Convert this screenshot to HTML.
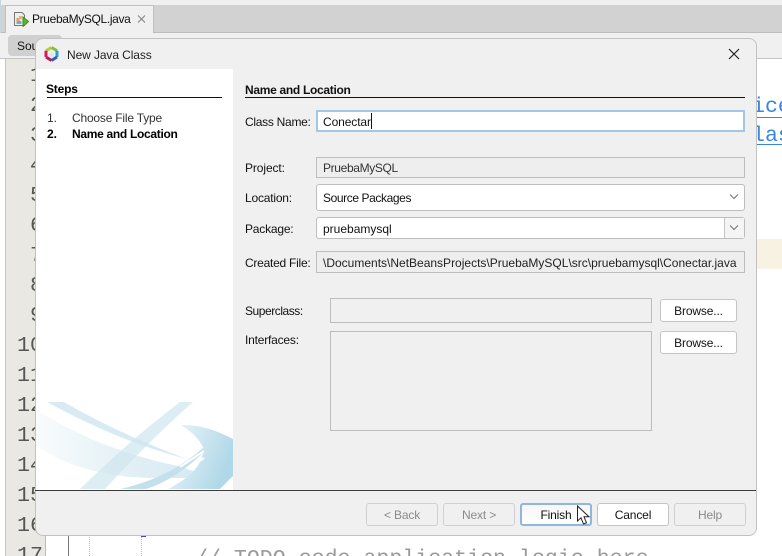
<!DOCTYPE html>
<html>
<head>
<meta charset="utf-8">
<style>
html,body{margin:0;padding:0;width:782px;height:556px;overflow:hidden;background:#fff}
#r{position:relative;width:782px;height:556px;overflow:hidden;background:#fff;font-family:"Liberation Sans",sans-serif;font-size:12px;color:#111}
.a{position:absolute;box-sizing:border-box}
.t{position:absolute;white-space:nowrap;line-height:14px}
.n{position:absolute;font-family:"Liberation Mono",monospace;font-size:21.600px;line-height:30px;color:#555;white-space:pre}
.f{position:absolute;box-sizing:border-box;border:1px solid #bdbdbd;background:#f0f0f0}
.w{background:#fff;border-radius:3px}
.b{position:absolute;box-sizing:border-box;height:23px;border:1px solid #c4c4c4;border-radius:3px;background:#fff;text-align:center;line-height:22px;color:#111;letter-spacing:-.15px}
.d{background:#f0f0f0;color:#8a8a8a;border-color:#d0d0d0}
</style>
</head>
<body>
<div id="r">
<div class="a" style="left:0;top:0;width:782px;height:58px;background:#f0f0f0"></div>
<div class="a" style="left:0;top:5px;width:782px;height:28px;background:#d2d2d2;border-bottom:1px solid #bcbcbc"></div>
<div class="a" style="left:5px;top:5px;width:149px;height:28px;background:#f0f0f0;border:1px solid #c0c0c0;border-bottom:0"></div>
<svg class="a" style="left:13px;top:11px" width="16" height="16" viewBox="0 0 16 16"><path d="M1.500 1.500H9L11.500 4V14.500H1.500Z" fill="#eee" stroke="#777"/><rect x="3.500" y="7" width="3" height="3" fill="#d9a066"/><rect x="6" y="5" width="3" height="3" fill="#e3b27c"/><rect x="3.500" y="10" width="5" height="3" fill="#7fa8c9"/><path d="M10 6L15.500 10.500L10 15.500Z" fill="#5cb531" stroke="#3f8f1c"/></svg>
<div class="t" style="left:32px;top:12px;letter-spacing:-.35px;color:#111">PruebaMySQL.java</div>
<svg class="a" style="left:137px;top:14px" width="10" height="10"><path d="M1 1.500L8 8.500M8 1.500L1 8.500" stroke="#8a8a8a" stroke-width="1.200" fill="none"/></svg>
<div class="a" style="left:8px;top:35px;width:54px;height:21px;background:#d0d0d0;border-radius:4px"></div>
<div class="t" style="left:17px;top:39px">Source</div>
<div class="a" style="left:0;top:58px;width:782px;height:1px;background:#c4c4c4"></div>
<div class="a" style="left:0;top:0;width:1px;height:33px;background:#c9d4e0"></div>
<div class="a" style="left:5px;top:59px;width:1px;height:497px;background:#c4c4c4"></div>
<div class="a" style="left:6px;top:59px;width:39px;height:497px;background:#e9e8e3"></div>
<div class="a" style="left:45px;top:59px;width:1px;height:497px;background:#bbb"></div>
<div class="a" style="left:68px;top:535px;width:1px;height:21px;background:#777"></div>
<div class="a" style="left:89px;top:535px;width:0;height:21px;border-left:1px dotted #bbb"></div>
<div class="a" style="left:141px;top:535px;width:0;height:21px;border-left:1px dotted #bbb"></div>
<div class="a" style="left:141px;top:535px;width:5px;height:2px;background:#45558f"></div>
<div class="a" style="left:523px;top:535px;width:5px;height:1px;background:#333"></div>
<div class="a" style="left:600px;top:535px;width:5px;height:1px;background:#333"></div>
<div class="n" style="left:17px;top:31px">
 1
 2
 3
 4
 5
 6
 7
 8
 9
10
11
12
13
14
15
16
17</div>
<div class="a" style="left:757px;top:239px;width:25px;height:30px;background:#f7f2e1"></div>
<div class="n" style="left:752px;top:92px;color:#3a86dd">ice</div>
<div class="a" style="left:757px;top:117px;width:25px;height:1px;background:#3a86dd"></div>
<div class="n" style="left:752px;top:121px;color:#3a86dd">las</div>
<div class="a" style="left:757px;top:144px;width:25px;height:1px;background:#3a86dd"></div>
<div class="n" style="left:195px;top:544px;color:#9a9a9a">// TODO code application logic here</div>

<div class="a" style="left:35px;top:38px;width:722px;height:498px;background:#f0f0f0;border:1px solid #c2c2c2;border-radius:8px"></div>
<svg class="a" style="left:44px;top:46px" width="15" height="16" viewBox="0 0 15 16">
<path d="M7.500 5.500L10 7V10L7.500 11.500L5 10V7Z" fill="#dbeaf6"/>
<path d="M2 4.700L7.500 1.500" stroke="#b9cf3a" stroke-width="3" fill="none"/>
<path d="M7.500 1.500L13 4.700" stroke="#7cc242" stroke-width="3" fill="none"/>
<path d="M13 4.700V11" stroke="#2b9bd8" stroke-width="3" fill="none"/>
<path d="M13 11L7.500 14.500" stroke="#2b62b8" stroke-width="3" fill="none"/>
<path d="M7.500 14.500L2 11" stroke="#c9184f" stroke-width="3" fill="none"/>
<path d="M2 11V4.700" stroke="#d02060" stroke-width="3" fill="none"/>
</svg>
<div class="t" style="left:67px;top:48px;letter-spacing:-.1px;color:#222">New Java Class</div>
<svg class="a" style="left:728px;top:48px" width="12" height="12"><path d="M1 1L11 11M11 1L1 11" stroke="#222" stroke-width="1.200" fill="none"/></svg>

<div class="a" style="left:36px;top:69px;width:197px;height:421px;background:#fff"></div>
<svg class="a" style="left:36px;top:400px" width="197" height="90" viewBox="36 400 197 90">
<defs>
<linearGradient id="g1" x1="0" x2="1" y1="0" y2="0"><stop offset="0" stop-color="#d5e9f1" stop-opacity=".15"/><stop offset=".6" stop-color="#d5e9f1" stop-opacity=".75"/><stop offset="1" stop-color="#d5e9f1"/></linearGradient>
<linearGradient id="g2" x1="0" x2="1" y1="0" y2=".4"><stop offset="0" stop-color="#f0f7fa"/><stop offset="1" stop-color="#b0d8e8"/></linearGradient>
</defs>
<path d="M47 402H64Q115 432 187 459Q120 442 47 402Z" fill="#d8ebf3"/>
<path d="M36 410Q100 450 178 466L214 478H150Q80 476 36 446Z" fill="url(#g1)"/>
<path d="M180 402H193Q150 440 105 489H80Q130 440 180 402Z" fill="#cfe6f0" opacity=".7"/>
<path d="M120 489Q170 478 204 447L204 452Q175 480 146 489Z" fill="#c4e0ec"/>
<path d="M181 425Q205 424 233 439V476L220 489H168Q205 470 203 447Q197 435 181 425Z" fill="url(#g2)"/>
<path d="M180 467L204 451M190 467L204 458M150 489L176 480" stroke="#fff" stroke-width="2" fill="none"/>
</svg>
<div class="t" style="left:46px;top:82px;font-weight:bold;color:#000;letter-spacing:-.2px">Steps</div>
<div class="a" style="left:47px;top:97px;width:175px;height:1px;background:#111"></div>
<div class="t" style="left:47px;top:111px;color:#333">1.</div>
<div class="t" style="left:72px;top:111px;color:#333;letter-spacing:-.2px">Choose File Type</div>
<div class="t" style="left:47px;top:127px;font-weight:bold;color:#000">2.</div>
<div class="t" style="left:72px;top:127px;font-weight:bold;color:#000;letter-spacing:-.3px">Name and Location</div>

<div class="t" style="left:245px;top:83px;font-weight:bold;color:#111;letter-spacing:-.3px">Name and Location</div>
<div class="a" style="left:245px;top:97px;width:500px;height:1px;background:#111"></div>

<div class="t" style="left:245px;top:115px;letter-spacing:-.28px">Class Name:</div>
<div class="a" style="left:316px;top:110px;width:429px;height:22px;background:#fff;border:2px solid #a3c6e6"></div>
<div class="t" style="left:323px;top:115px;letter-spacing:-.1px">Conectar</div>
<div class="a" style="left:371px;top:113px;width:1px;height:16px;background:#111"></div>

<div class="t" style="left:245px;top:161px;letter-spacing:-.1px">Project:</div>
<div class="f" style="left:316px;top:157px;width:429px;height:21px;background:#eeeeee"></div>
<div class="t" style="left:323px;top:161px;color:#333;letter-spacing:-.35px">PruebaMySQL</div>

<div class="t" style="left:245px;top:191px;letter-spacing:-.2px">Location:</div>
<div class="f w" style="left:316px;top:184px;width:429px;height:27px"></div>
<div class="t" style="left:323px;top:191px;letter-spacing:-.4px">Source Packages</div>
<svg class="a" style="left:729px;top:193px" width="10" height="8"><path d="M1 1.500L5 5.500L9 1.500" stroke="#777" stroke-width="1.100" fill="none"/></svg>

<div class="t" style="left:245px;top:222px;letter-spacing:-.2px">Package:</div>
<div class="f w" style="left:316px;top:217px;width:429px;height:22px"></div>
<div class="a" style="left:724px;top:218px;width:20px;height:20px;background:#f4f4f4;border-left:1px solid #c4c4c4"></div>
<div class="t" style="left:323px;top:222px">pruebamysql</div>
<svg class="a" style="left:729px;top:224px" width="10" height="8"><path d="M1 1.500L5 5.500L9 1.500" stroke="#777" stroke-width="1.100" fill="none"/></svg>

<div class="t" style="left:245px;top:256px;letter-spacing:-.25px">Created File:</div>
<div class="f" style="left:316px;top:251px;width:429px;height:22px;background:#eeeeee"></div>
<div class="t" style="left:323px;top:256px;color:#222">\Documents\NetBeansProjects\PruebaMySQL\src\pruebamysql\Conectar.java</div>

<div class="t" style="left:245px;top:304px;letter-spacing:-.45px">Superclass:</div>
<div class="f" style="left:330px;top:298px;width:322px;height:25px"></div>
<div class="b" style="left:660px;top:299px;width:77px">Browse...</div>
<div class="t" style="left:245px;top:333px;letter-spacing:-.2px">Interfaces:</div>
<div class="f" style="left:330px;top:331px;width:322px;height:100px"></div>
<div class="b" style="left:660px;top:331px;width:77px">Browse...</div>

<div class="a" style="left:35px;top:490px;width:721px;height:1px;background:#3c3c3c"></div>
<div class="b d" style="left:366px;top:503px;width:72px">&lt; Back</div>
<div class="b d" style="left:443px;top:503px;width:72px">Next &gt;</div>
<div class="b" style="left:520px;top:503px;width:72px;border:2px solid #8fb6dc;line-height:20px;background:linear-gradient(#f6f6f6,#fff)">Finish</div>
<div class="b" style="left:597px;top:503px;width:72px">Cancel</div>
<div class="b d" style="left:674px;top:503px;width:72px">Help</div>
<svg class="a" style="left:576px;top:505px" width="16" height="21" viewBox="0 0 16 21"><path d="M1.500 1V16L5 12.800L7.500 19L10.500 17.800L8 11.800H13Z" fill="#fff" stroke="#222" stroke-width="1"/></svg>
</div>
</body>
</html>
